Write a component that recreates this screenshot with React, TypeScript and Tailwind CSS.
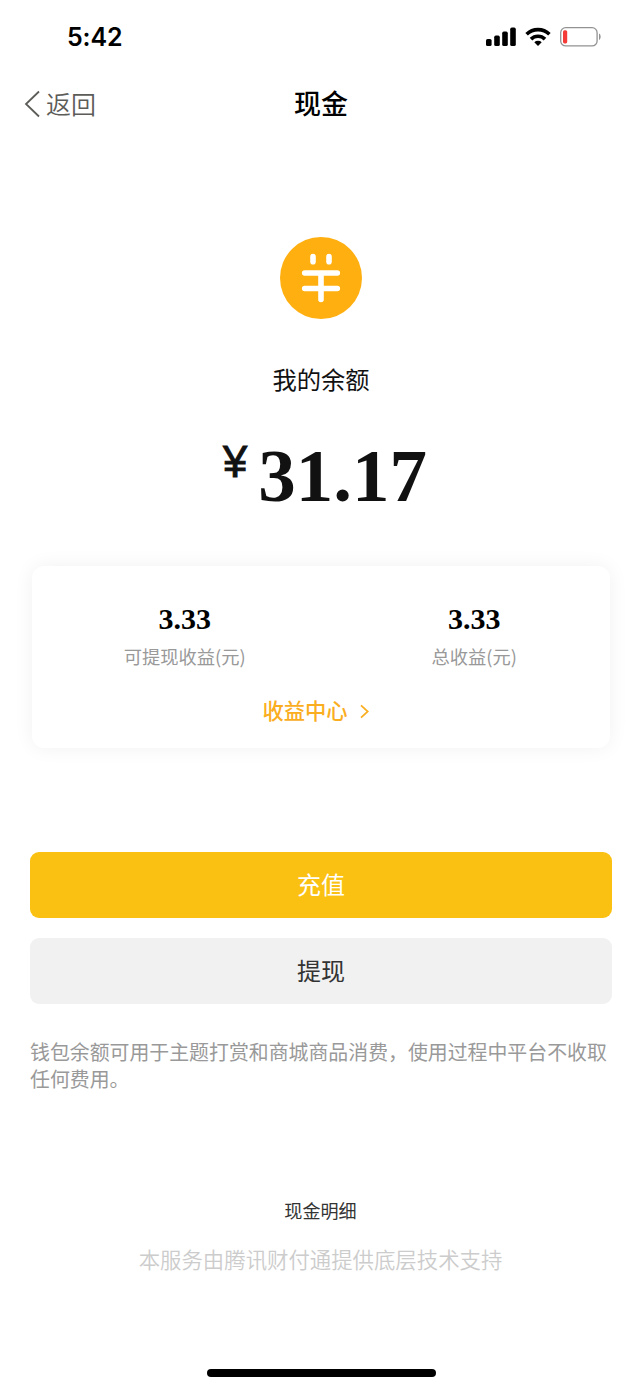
import type { ReactNode } from "react";

function SignalIcon() {
  return (
    <svg width="30" height="20" viewBox="0 0 30 20">
      <rect x="0" y="12" width="5.6" height="7" rx="1.6" />
      <rect x="8.2" y="8.6" width="5.6" height="10.4" rx="1.6" />
      <rect x="16.2" y="4.6" width="5.6" height="14.4" rx="1.6" />
      <rect x="24.2" y="0.6" width="5.6" height="18.4" rx="1.6" />
    </svg>
  );
}

function WifiIcon() {
  return (
    <svg width="26" height="20" viewBox="0 0 26 20" fill="none" stroke="#000" strokeWidth="3.6">
      <path d="M1.6 7.3a16.3 16.3 0 0 1 22.8 0" />
      <path d="M6 12.1a10 10 0 0 1 14 0" />
      <path d="M13 19l-3.7-3.8a5.4 5.4 0 0 1 7.4 0z" fill="#000" stroke="none" />
    </svg>
  );
}

function BatteryIcon() {
  return (
    <svg width="42" height="20" viewBox="0 0 42 20">
      <rect x="0.7" y="0.7" width="36.4" height="18.2" rx="5" fill="none" stroke="#929292" strokeWidth="1.3" />
      <rect x="3" y="3.2" width="4.2" height="13.2" rx="1.6" fill="#f43b37" />
      <path d="M39 6.6c2.2 1 2.2 5.400 0 6.400z" fill="#929292" />
    </svg>
  );
}

function CoinIcon() {
  return (
    <svg width="82" height="82" viewBox="0 0 82 82">
      <circle cx="41" cy="41" r="41" fill="#ffaf10" />
      <g fill="none" stroke="#fff" strokeWidth="5.6" strokeLinecap="round">
        <path d="M33 19.500v5.200M49 19.500v5.200M24.700 36h32.600M24.700 51.500h32.600" />
        <path d="M41 37v25.500" />
      </g>
    </svg>
  );
}

function Stat({ value, label }: { value: string; label: string }) {
  return (
    <div className="flex flex-1 flex-col items-center">
      <span className="font-['Liberation_Serif',serif] text-[30px] leading-[36px] font-bold text-black">{value}</span>
      <span className="mt-[6px] text-[18.300px] leading-[26px] text-[#999]">{label}</span>
    </div>
  );
}

function ActionButton({ tone, children }: { tone: string; children: ReactNode }) {
  return (
    <button className={`flex h-[66px] w-full items-center justify-center rounded-[9px] pb-[3px] text-[24px] ${tone}`}>
      {children}
    </button>
  );
}

export default function App() {
  return (
    <div className="flex h-[1389px] w-[642px] flex-col bg-white font-['Noto_Sans_CJK_SC',sans-serif]">
      <div className="flex h-[74px] items-center justify-between pr-[40px] pl-[67px]">
        <span className="mt-px font-['Inter',sans-serif] text-[25px] font-semibold tracking-[-0.1px] text-black">5:42</span>
        <div className="flex items-center gap-[9px]">
          <SignalIcon />
          <WifiIcon />
          <BatteryIcon />
        </div>
      </div>

      <header className="grid h-[60px] grid-cols-3 items-center px-[24px] pb-[2px]">
        <button className="flex items-center gap-[6px] text-[25px] leading-[36px] font-[350] text-[#5c5c58]">
          <svg className="mt-px" width="16" height="28" viewBox="0 0 16 28" fill="none" stroke="#5c5c58" strokeWidth="1.800">
            <path d="M15 1.500L2 14l13 12.500" />
          </svg>
          返回
        </button>
        <h1 className="text-center text-[27px] leading-[36px] font-medium text-black">现金</h1>
      </header>

      <main className="flex flex-1 flex-col items-center">
        <div className="mt-[103px]">
          <CoinIcon />
        </div>
        <p className="mt-[42px] text-[24.300px] leading-[36px] text-[#111]">我的余额</p>
        <div className="mt-[37px] mr-[-8px] flex h-[84px] items-start">
          <span className="mt-[4px] mr-[11px] font-['Liberation_Sans',sans-serif] text-[43.500px] leading-[48px] text-[#111] [-webkit-text-stroke:1px_#111]">¥</span>
          <span className="font-['Liberation_Serif',serif] text-[75px] leading-[84px] font-bold text-[#111]">31.17</span>
        </div>

        <section className="mt-[48px] flex h-[182px] w-[578px] flex-col rounded-[12px] bg-white pt-[35px] shadow-[0_0_20px_rgba(0,0,0,0.06)]">
          <div className="-mr-[9px] flex pl-[8px]">
            <Stat value="3.33" label="可提现收益(元)" />
            <Stat value="3.33" label="总收益(元)" />
          </div>
          <button className="mt-[25px] flex items-center justify-center gap-[12px] pr-[11px] text-[21.300px] leading-[32px] font-medium text-[#faad1e]">
            收益中心
            <svg className="mt-[2px]" width="9" height="15" viewBox="0 0 9 15" fill="none" stroke="#faad1e" strokeWidth="1.700">
              <path d="M1 1.300L7.800 7.500 1 13.700" />
            </svg>
          </button>
        </section>

        <div className="mt-[104px] flex w-[582px] flex-col gap-[20px]">
          <ActionButton tone="bg-[#fbc112] text-white">充值</ActionButton>
          <ActionButton tone="bg-[#f1f1f1] text-[#333]">提现</ActionButton>
        </div>

        <p className="mt-[34px] w-[582px] text-[19.900px] leading-[27px] text-[#999]">
          钱包余额可用于主题打赏和商城商品消费，使用过程中平台不收取任何费用。
        </p>

        <a className="mt-[105px] mr-px text-[18.100px] leading-[26px] text-[#333]">现金明细</a>
        <p className="mt-[20px] mr-px text-[21.400px] leading-[32px] font-[350] text-[#ccc]">本服务由腾讯财付通提供底层技术支持</p>
        <div className="mt-auto mb-[12px] h-[8px] w-[229px] rounded-full bg-black" />
      </main>
    </div>
  );
}
